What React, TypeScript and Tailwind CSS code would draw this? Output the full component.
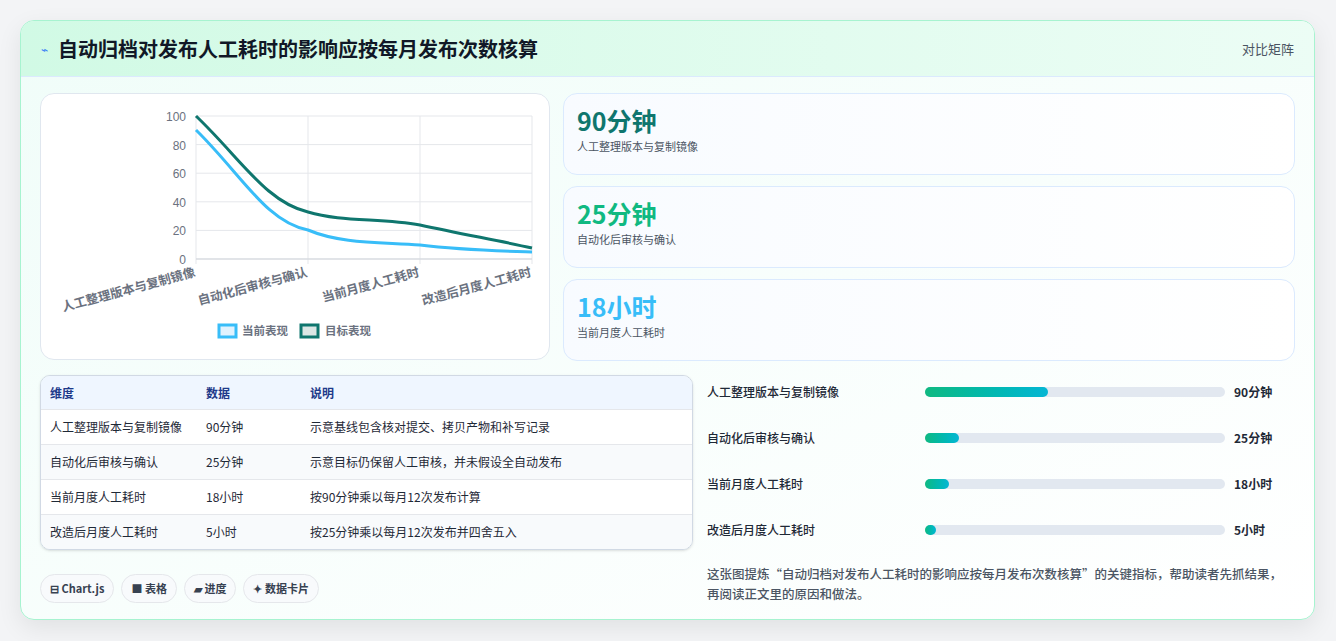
import React from "react";

const F = { fontFamily: '"Noto Sans CJK SC", "Noto Sans", sans-serif' };

const cards = [
  { v: "90分钟", l: "人工整理版本与复制镜像", c: "text-[#0f766e]" },
  { v: "25分钟", l: "自动化后审核与确认", c: "text-[#10b981]" },
  { v: "18小时", l: "当前月度人工耗时", c: "text-[#38bdf8]" },
];
const rows = [
  ["人工整理版本与复制镜像", "90分钟", "示意基线包含核对提交、拷贝产物和补写记录"],
  ["自动化后审核与确认", "25分钟", "示意目标仍保留人工审核，并未假设全自动发布"],
  ["当前月度人工耗时", "18小时", "按90分钟乘以每月12次发布计算"],
  ["改造后月度人工耗时", "5小时", "按25分钟乘以每月12次发布并四舍五入"],
];
const bars = [
  ["人工整理版本与复制镜像", 123, "90分钟"],
  ["自动化后审核与确认", 34, "25分钟"],
  ["当前月度人工耗时", 24, "18小时"],
  ["改造后月度人工耗时", 11, "5小时"],
] as const;

function Chart() {
  const xs = [155, 267, 379, 491];
  const ys = [22, 50.6, 79.2, 107.8, 136.4, 165];
  const labels = ["人工整理版本与复制镜像", "自动化后审核与确认", "当前月度人工耗时", "改造后月度人工耗时"];
  return (
    <svg width="509" height="266" viewBox="0 0 509 266" className="block">
      {ys.map((y, i) => (
        <g key={i}>
          <line x1={155} x2={491} y1={y} y2={y} stroke="#e5e7eb" strokeWidth="1" />
          <text x={145} y={y + 5} textAnchor="end" fontSize="12" fill="#6b7280" fontFamily="Liberation Sans, sans-serif">
            {100 - i * 20}
          </text>
        </g>
      ))}
      {xs.map((x, i) => (
        <line key={i} x1={x} x2={x} y1={22} y2={170} stroke="#e5e7eb" strokeWidth="1" />
      ))}
      <line x1={155} x2={491} y1={165} y2={165} stroke="#d1d5db" />
      <path d="M155 36 C 200 80, 225 128, 267 136 C 300 150, 340 148, 379 151 C 420 156, 460 157, 491 158" fill="none" stroke="#38bdf8" strokeWidth="3" />
      <path d="M155 22 C 200 65, 225 108, 267 118 C 300 128, 340 124, 379 131 C 420 140, 460 147, 491 154" fill="none" stroke="#0f766e" strokeWidth="3" />
      {labels.map((l, i) => (
        <text key={i} x={xs[i]} y={182} textAnchor="end" fontSize="12.5" fontWeight="600" fill="#6b7280" transform={`rotate(-15 ${xs[i]} 182)`} style={F}>
          {l}
        </text>
      ))}
      <rect x={178} y={231} width={17} height={12} fill="#e0f2fe" stroke="#38bdf8" strokeWidth="3" />
      <text x={201} y={241} fontSize="11.5" fill="#6b7280" fontWeight="600" style={F}>当前表现</text>
      <rect x={260} y={231} width={17} height={12} fill="#dbe7e5" stroke="#0f766e" strokeWidth="3" />
      <text x={284} y={241} fontSize="11.5" fill="#6b7280" fontWeight="600" style={F}>目标表现</text>
    </svg>
  );
}

export default function App() {
  return (
    <div className="w-[1336px] h-[641px] bg-[#f3f4f6] pt-[20px] pl-[20px]" style={F}>
      <div className="w-[1295px] h-[600px] rounded-[14px] border border-[#a7f3d0] bg-gradient-to-br from-[#f0fdf9] to-white shadow-[0_8px_24px_rgba(0,0,0,0.08)] overflow-hidden">
        <div className="h-[56px] flex items-center justify-between px-[20px] bg-gradient-to-r from-[#d1fae5] to-[#ecfdf5] border-b border-[#dbeafe]">
          <div className="flex items-center gap-[10px]">
            <span className="text-[#3b82f6] text-[12px]">⌁</span>
            <span className="text-[20px] font-bold text-[#111827]">自动归档对发布人工耗时的影响应按每月发布次数核算</span>
          </div>
          <span className="text-[13px] text-[#4b5563]">对比矩阵</span>
        </div>
        <div className="px-[19px] pt-[16px]">
          <div className="flex gap-[13px]">
            <div className="w-[510px] h-[267px] rounded-[14px] border border-[#e0e7ef] bg-white">
              <Chart />
            </div>
            <div className="flex-1 flex flex-col gap-[11px]">
              {cards.map((c) => (
                <div key={c.v} className="h-[82px] rounded-[14px] border border-[#dbeafe] bg-gradient-to-r from-[#f8fbff] to-white px-[13px] pt-[10px]">
                  <div className={`text-[25px] font-bold leading-[32px] ${c.c}`}>{c.v}</div>
                  <div className="text-[11px] text-[#4b5563] mt-[2px]">{c.l}</div>
                </div>
              ))}
            </div>
          </div>
          <div className="flex gap-[14px] mt-[14px]">
            <div className="w-[653px]">
              <div className="rounded-[10px] border border-[#d1d9e4] overflow-hidden shadow-sm">
                {[["维度", "数据", "说明"], ...rows].map((r, i) => (
                  <div key={i} className={`flex items-center text-[12px] ${i === 0 ? "bg-[#eff6ff] text-[#1e3a8a] font-semibold h-[33px]" : i % 2 === 0 ? "h-[35px] bg-[#f8fafc] text-[#1f2937] border-t border-[#e5e7eb]" : "h-[35px] bg-white text-[#1f2937] border-t border-[#e5e7eb]"}`}>
                    <div className="w-[156px] pl-[9px]">{r[0]}</div>
                    <div className="w-[104px] pl-[9px]">{r[1]}</div>
                    <div className="flex-1 pl-[9px]">{r[2]}</div>
                  </div>
                ))}
              </div>
              <div className="flex gap-[7px] mt-[24px]">
                {["⊟ Chart.js", "■ 表格", "▰ 进度", "✦ 数据卡片"].map((t) => (
                  <span key={t} className="h-[29px] px-[9px] rounded-full border border-[#e5e7eb] bg-[#f8fafc] text-[11px] font-semibold text-[#374151] flex items-center">
                    {t}
                  </span>
                ))}
              </div>
            </div>
            <div className="flex-1">
              <div className="flex flex-col gap-[34px] pt-[11px]">
                {bars.map(([l, w, v]) => (
                  <div key={l} className="flex items-center h-[12px]">
                    <div className="w-[218px] text-[12px] font-medium text-[#1f2937]">{l}</div>
                    <div className="w-[300px] h-[10px] rounded-full bg-[#e2e8f0]">
                      <div className="h-[10px] rounded-full bg-gradient-to-r from-[#10b981] to-[#06b6d4]" style={{ width: w }} />
                    </div>
                    <div className="ml-[9px] text-[12px] font-bold text-[#1f2937]">{v}</div>
                  </div>
                ))}
              </div>
              <p className="mt-[28px] max-w-[585px] text-[12.5px] leading-[20px] text-[#4b5563] font-medium">
                这张图提炼“自动归档对发布人工耗时的影响应按每月发布次数核算”的关键指标，帮助读者先抓结果，<br />再阅读正文里的原因和做法。
              </p>
            </div>
          </div>
        </div>
      </div>
    </div>
  );
}
